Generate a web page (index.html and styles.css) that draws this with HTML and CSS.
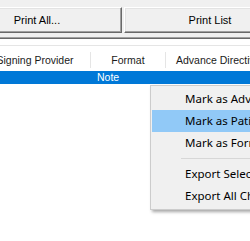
FILE: index.html
```html
<!DOCTYPE html>
<html lang="en">
<head>
	<meta charset="UTF-8">
	<title>Print list</title>
	<link rel="stylesheet" href="styles.css">
</head>
<body>

	<div id="window">
		<div class="toolbar">
			<button class="btn btn-all">Print All...</button>
			<button class="btn btn-list">Print List</button>
		</div>

		<div class="list">
			<div class="list-top"></div>
			<div class="header">
				<div class="col col-provider">Signing Provider</div>
				<span class="sep"></span>
				<div class="col col-format">Format</div>
				<span class="sep"></span>
				<div class="col col-advance">Advance Directive</div>
			</div>
			<div class="group">Note</div>
			<div class="rows"></div>
		</div>

		<div class="menu">
			<div class="item">Mark as Advance Directive</div>
			<div class="item hot">Mark as Patient Document</div>
			<div class="item">Mark as Form</div>
			<div class="divider"></div>
			<div class="item">Export Selected</div>
			<div class="item">Export All Checked</div>
		</div>
	</div>

</body>
</html>
```

FILE: styles.css
```css
html,body{
	margin: 0;
	padding: 0;
}
body{
	background-color: #F0F0F0;
	font-family: "Noto Sans", "Open Sans", sans-serif;
	font-size: 11.5px;
	color: #000;
}
#window{
	width: 250px;
	height: 241px;
	overflow: hidden;
	position: relative;
}
.toolbar{
	display: flex;
	gap: 2px;
	padding-top: 7px;
	margin-left: -48px;
}
.btn{
	height: 26px;
	padding: 0;
	margin: 0;
	background-color: #F0F0F0;
	border-top: 1px solid #fff;
	border-left: 1px solid #fff;
	border-right: 1px solid #696969;
	border-bottom: 1px solid #696969;
	box-shadow: inset -1px -1px 0 #A0A0A0, inset 1px 1px 0 #E3E3E3;
	font-family: "Liberation Sans", Arial, sans-serif;
	font-size: 11px;
	color: #000;
	outline: none;
}
.btn-all{
	width: 170px;
	flex: none;
}
.btn-list{
	width: 172px;
	flex: none;
}
.list{
	margin-top: 4px;
	border-top: 1px solid #A0A0A0;
	background-color: #fff;
	height: 210px;
	font-family: "Liberation Sans", Arial, sans-serif;
	font-size: 10.5px;
}
.list-top{
	height: 6px;
	border-top: 1px solid #696969;
	border-bottom: 1px solid #E5E5E5;
}
.header{
	display: flex;
	align-items: center;
	height: 25px;
	margin-left: -20px;
	background-color: #fff;
	color: #1a1a1a;
}
.col{
	flex: none;
	padding-top: 3px;
	white-space: nowrap;
	overflow: hidden;
}
.col-provider{
	width: 110px;
	text-align: center;
}
.col-format{
	width: 74px;
	text-align: center;
}
.col-advance{
	width: 200px;
	padding-left: 10px;
}
.sep{
	flex: none;
	width: 1px;
	height: 16px;
	margin-top: 3px;
	background-color: #E5E5E5;
}
.group{
	height: 13px;
	line-height: 13px;
	background-color: #0078D7;
	color: #fff;
	padding-left: 97px;
}
.menu{
	position: absolute;
	left: 150px;
	top: 85px;
	width: 160px;
	padding: 2px 0 2px 1px;
	background-color: #F0F0F0;
	border: 1px solid #CCCCCC;
	box-shadow: 2px 2px 3px rgba(0,0,0,0.35);
}
.item{
	height: 22px;
	line-height: 22px;
	padding-left: 33px;
	white-space: nowrap;
}
.hot{
	background-color: #91C9F7;
}
.divider{
	height: 1px;
	margin: 4px 0 4px 29px;
	background-color: #D7D7D7;
}
```
